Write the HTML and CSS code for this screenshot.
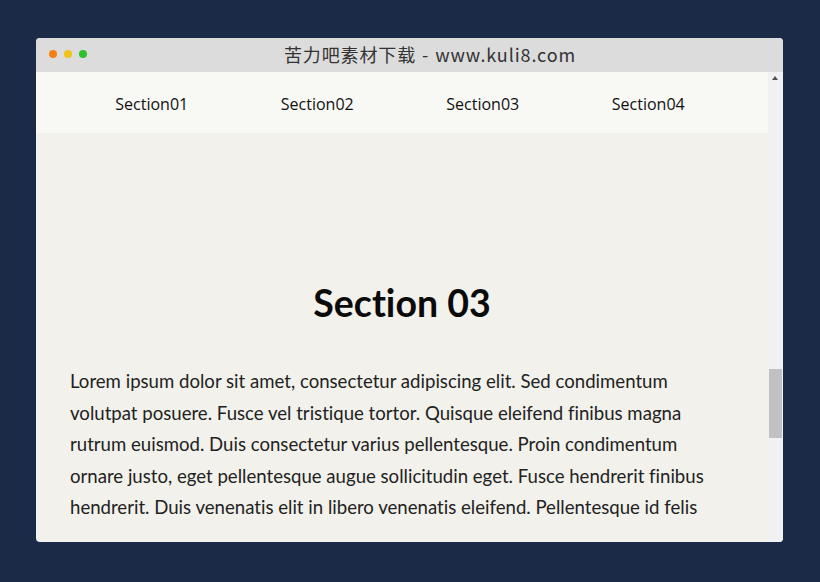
FILE: index.html
```html
<!DOCTYPE html>
<html lang="en">
<head>
<meta charset="utf-8">
<title>Section 03</title>
<link rel="stylesheet" href="styles.css">
</head>
<body>
<div class="window">
  <div class="titlebar">
    <div class="dots">
      <span class="dot dot-red"></span>
      <span class="dot dot-yellow"></span>
      <span class="dot dot-green"></span>
    </div>
    <div class="title">苦力吧素材下载 - www.kuli8.com</div>
  </div>
  <div class="viewport">
    <div class="page">
      <nav class="nav">
        <a class="nav-item">Section01</a>
        <a class="nav-item">Section02</a>
        <a class="nav-item">Section03</a>
        <a class="nav-item">Section04</a>
      </nav>
      <section class="section">
        <h1 class="section-title">Section 03</h1>
        <p class="section-text">Lorem ipsum dolor sit amet, consectetur adipiscing elit. Sed condimentum volutpat posuere. Fusce vel tristique tortor. Quisque eleifend finibus magna rutrum euismod. Duis consectetur varius pellentesque. Proin condimentum ornare justo, eget pellentesque augue sollicitudin eget. Fusce hendrerit finibus hendrerit. Duis venenatis elit in libero venenatis eleifend. Pellentesque id felis</p>
      </section>
    </div>
    <div class="scrollbar">
      <div class="scroll-up"></div>
      <div class="scroll-track">
        <div class="scroll-thumb"></div>
      </div>
    </div>
  </div>
</div>
</body>
</html>
```
FILE: styles.css
```css
html, body {
  margin: 0;
  padding: 0;
}
body {
  background: #1b2a47;
  width: 820px;
  height: 582px;
  overflow: hidden;
  padding: 38px 0 0 36px;
  box-sizing: border-box;
}
.window {
  width: 747px;
  height: 504px;
  border-radius: 4px;
  overflow: hidden;
  background: #f2f1eb;
  display: flex;
  flex-direction: column;
}
.titlebar {
  height: 34px;
  background: #dcdcdc;
  display: flex;
  align-items: center;
  padding-bottom: 2px;
  box-sizing: border-box;
}
.dots {
  display: flex;
  gap: 7px;
  padding-left: 13px;
}
.dot {
  width: 8px;
  height: 8px;
  border-radius: 50%;
  display: block;
}
.dot-red { background: #f77f10; }
.dot-yellow { background: #f0c419; }
.dot-green { background: #2ec02e; }
.title {
  flex: 1;
  text-align: center;
  margin-right: 10px;
  font-family: "Noto Sans CJK SC", "DejaVu Sans", sans-serif;
  font-size: 18px;
  color: #333;
  letter-spacing: 0.9px;
  word-spacing: 1px;
}
.viewport {
  flex: 1;
  display: flex;
  min-height: 0;
}
.page {
  flex: 1;
  overflow: hidden;
}
.nav {
  height: 61px;
  background: #f8f8f4;
  display: grid;
  grid-template-columns: repeat(4, 1fr);
  align-items: center;
  padding: 2px 37px 0 33px;
  box-sizing: border-box;
}
.nav-item {
  text-align: center;
  font-family: "Open Sans", "Noto Sans", sans-serif;
  font-size: 16px;
  color: #111;
}
.section {
  padding: 148px 34px 0 34px;
}
.section-title {
  margin: 0;
  text-align: center;
  font-family: Lato, sans-serif;
  font-weight: 700;
  font-size: 37.5px;
  line-height: 44px;
  color: #0a0a0a;
  font-variant-ligatures: none;
}
.section-text {
  margin: 41px 0 0 0;
  font-family: Lato, sans-serif;
  font-size: 18.6px;
  line-height: 31.5px;
  color: #222;
  max-width: 650px;
  font-variant-ligatures: none;
}
.scrollbar {
  width: 15px;
  background: #f1f1f1;
  display: flex;
  flex-direction: column;
}
.scroll-up {
  height: 15px;
  position: relative;
}
.scroll-up::after {
  content: "";
  position: absolute;
  left: 4px;
  top: 4px;
  border-left: 3.5px solid transparent;
  border-right: 3.5px solid transparent;
  border-bottom: 4px solid #505050;
}
.scroll-track {
  flex: 1;
  padding-top: 282px;
}
.scroll-thumb {
  margin-left: 1px;
  width: 13px;
  height: 69px;
  background: #c1c1c1;
}
```
